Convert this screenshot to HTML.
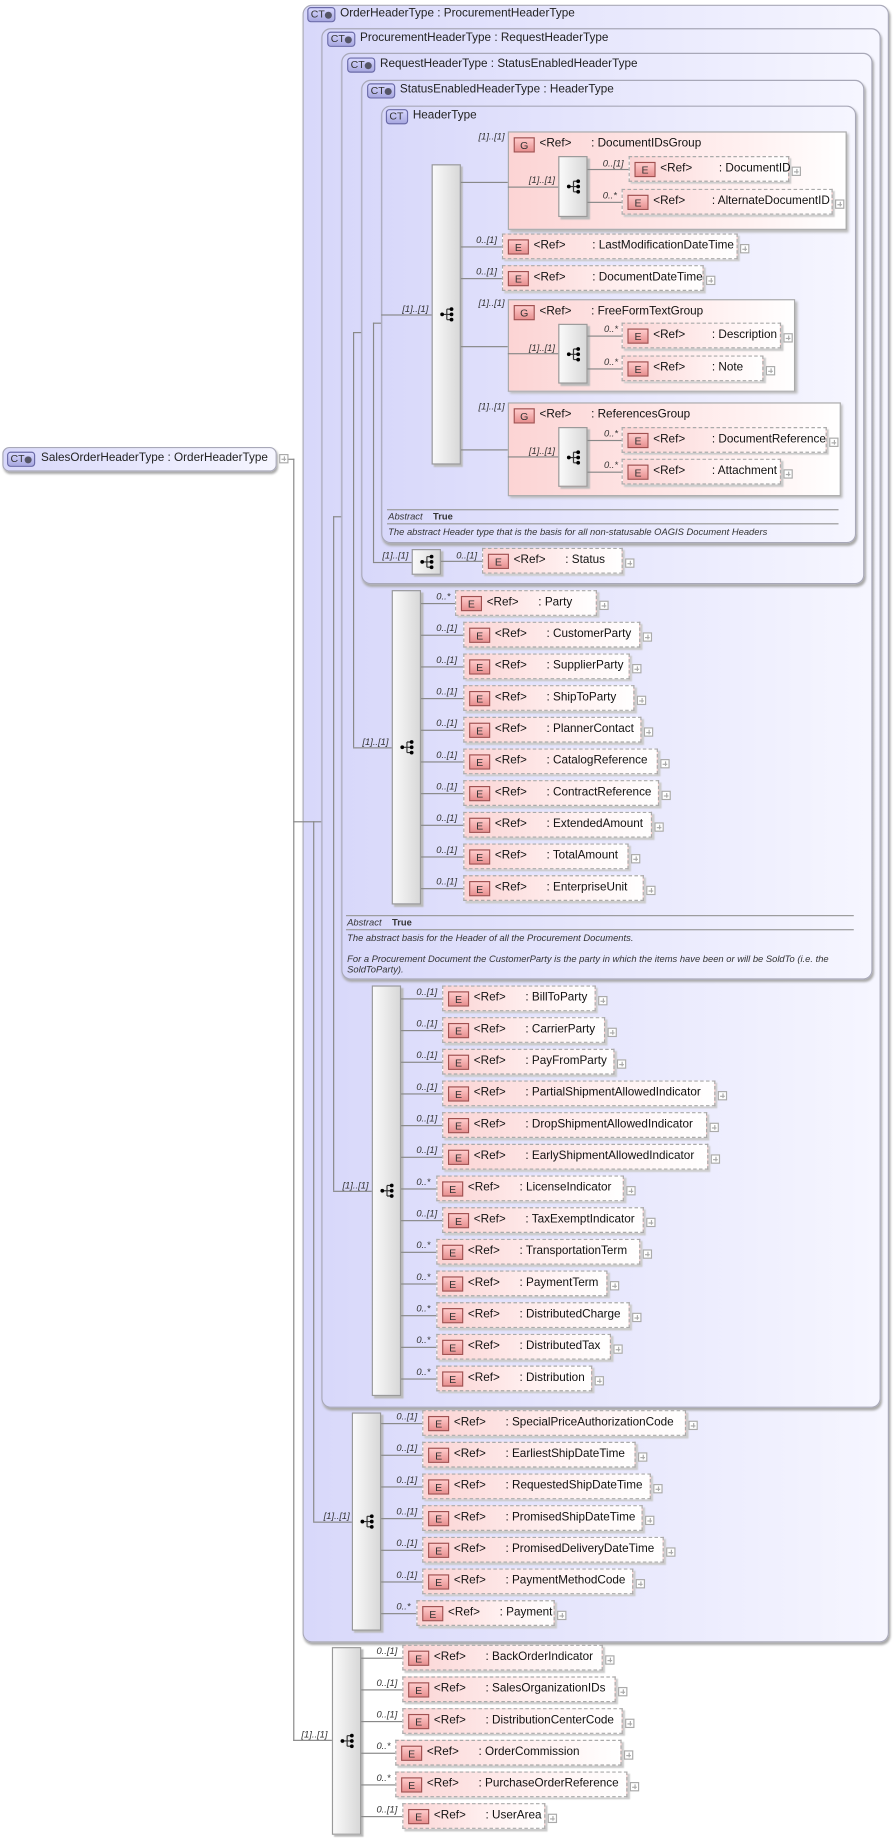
<!DOCTYPE html>
<html><head><meta charset="utf-8">
<style>
*{margin:0;padding:0;box-sizing:border-box}
body{width:896px;height:1843px;background:#fff;overflow:hidden;font-family:"Liberation Sans",Arial,sans-serif}
#s{position:absolute;left:0;top:0;width:764px;height:1571px;transform:scale(1.17277,1.17314);transform-origin:0 0}
#s div{position:absolute}
.b{border:1px solid #a8a8b8;border-radius:8px;background:linear-gradient(to right,#d8d8fa,#f6f6ff);box-shadow:1px 2px 2px #aaa}
.ti{font-size:10px;color:#222;white-space:nowrap}
.ct{width:24px;height:13px;border:1px solid #6a6aa8;border-radius:3px;background:linear-gradient(#d8d8ff,#a8a8e0);font-size:9px;line-height:11px;color:#333;padding-left:2px}
.ct.p:after{content:"";position:absolute;right:2px;top:3px;width:6px;height:6px;border-radius:50%;background:#556}
.e{height:22px;border:1px dashed #aaa;background:linear-gradient(to right,#fbd4d4,#fff0f0 60%,#fff);box-shadow:2px 2px 1px #ccc;font-size:10px;color:#111;white-space:nowrap}
.e i,.g i{position:absolute;left:4px;top:4px;width:18px;height:13px;border:1px solid #a05050;background:linear-gradient(#fcc,#e89090);font-style:normal;font-size:9px;line-height:12px;text-align:center;color:#333}
.e b,.g b{position:absolute;left:26px;top:4px;font-weight:normal}
.e s,.g s{position:absolute;left:70px;top:4px;text-decoration:none;font-weight:normal}
.e u{position:absolute;right:-11px;top:8px;width:8px;height:8px;border:1px solid #aaa;background:#fff}
.e u:before{content:"";position:absolute;left:1px;top:3px;width:4px;height:1px;background:#aaa}
.e u:after{content:"";position:absolute;left:3px;top:1px;width:1px;height:4px;background:#aaa}
.g{border:1px solid #aaa;background:linear-gradient(to right,#fcd4d4,#fff0f0 70%,#fff);box-shadow:2px 2px 2px #bbb;font-size:10px;color:#111;white-space:nowrap}
.q{width:25px;border:1px solid #999;background:linear-gradient(to right,#fafafa,#d8d8d8);box-shadow:2px 2px 1px #bbb;display:flex;align-items:center;justify-content:center}
.h{height:1px;background:#888}
.v{width:1px;background:#888}
.l{font-size:8px;font-style:italic;color:#333;white-space:nowrap}
.ab{font-size:8px;color:#333;white-space:nowrap}
.hr{height:1px;background:#999}
</style></head><body><div id="s">

<div class="b" style="left:2px;top:381px;width:234px;height:21px;border-radius:6px"></div>
<div class="ct p" style="left:6px;top:385px"><span>CT</span></div>
<div class="ti" style="left:35px;top:385px">SalesOrderHeaderType : OrderHeaderType</div>
<div class="e" style="left:238px;top:387px;width:0;height:0;border:none;box-shadow:none;background:none"><u style="left:0;top:0"></u></div>
<div class="h" style="left:246px;top:391px;width:5px"></div>
<div class="v" style="left:250px;top:391px;height:1093px"></div>
<div class="h" style="left:250px;top:700px;width:9px"></div>
<div class="h" style="left:250px;top:1483px;width:33px"></div>
<div class="l" style="left:257px;top:1474px">[1]..[1]</div>

<div class="b" style="left:258px;top:4px;width:500px;height:1396px"></div>
<div class="ct p" style="left:262px;top:6px">CT</div>
<div class="ti" style="left:290px;top:6px">OrderHeaderType : ProcurementHeaderType</div>
<div class="v" style="left:267px;top:700px;height:597px"></div>
<div class="h" style="left:258px;top:700px;width:16px"></div>
<div class="h" style="left:267px;top:1297px;width:33px"></div>
<div class="l" style="left:276px;top:1288px">[1]..[1]</div>

<div class="b" style="left:274px;top:24px;width:477px;height:1176px"></div>
<div class="ct p" style="left:279px;top:27px">CT</div>
<div class="ti" style="left:307px;top:27px">ProcurementHeaderType : RequestHeaderType</div>
<div class="v" style="left:284px;top:440px;height:575px"></div>
<div class="h" style="left:284px;top:440px;width:7px"></div>
<div class="h" style="left:284px;top:1015px;width:33px"></div>
<div class="l" style="left:292px;top:1006px">[1]..[1]</div>

<div class="b" style="left:291px;top:45px;width:453px;height:790px"></div>
<div class="ct p" style="left:296px;top:49px">CT</div>
<div class="ti" style="left:324px;top:49px">RequestHeaderType : StatusEnabledHeaderType</div>
<div class="v" style="left:301px;top:283px;height:354px"></div>
<div class="h" style="left:301px;top:283px;width:7px"></div>
<div class="h" style="left:301px;top:637px;width:33px"></div>
<div class="l" style="left:309px;top:628px">[1]..[1]</div>

<div class="b" style="left:308px;top:68px;width:429px;height:430px"></div>
<div class="ct p" style="left:313px;top:71px">CT</div>
<div class="ti" style="left:341px;top:71px">StatusEnabledHeaderType : HeaderType</div>
<div class="v" style="left:318px;top:275px;height:204px"></div>
<div class="h" style="left:318px;top:275px;width:7px"></div>
<div class="h" style="left:318px;top:479px;width:33px"></div>
<div class="l" style="left:326px;top:469px">[1]..[1]</div>

<div class="b" style="left:325px;top:90px;width:405px;height:373px"></div>
<div class="ct" style="left:329px;top:93px;width:19px">CT</div>
<div class="ti" style="left:352px;top:93px">HeaderType</div>
<div class="h" style="left:325px;top:268px;width:43px"></div>
<div class="l" style="left:343px;top:259px">[1]..[1]</div>

<div class="q" style="left:368px;top:140px;height:256px"><svg width="12" height="14"><path d="M2 7h4M6 2.5v9M6 2.5h4M6 7h4M6 11.5h4" stroke="#333" fill="none"/><circle cx="2" cy="7" r="1.6"/><circle cx="10" cy="2.5" r="1.6"/><circle cx="10" cy="7" r="1.6"/><circle cx="10" cy="11.5" r="1.6"/></svg></div>

<div class="h" style="left:393px;top:155px;width:40px"></div>
<div class="l" style="left:408px;top:112px">[1]..[1]</div>
<div class="g" style="left:433px;top:112px;width:289px;height:84px"><i>G</i><b>&lt;Ref&gt;</b><s>: DocumentIDsGroup</s></div>
<div class="h" style="left:433px;top:159px;width:43px"></div>
<div class="l" style="left:451px;top:149px">[1]..[1]</div>
<div class="q" style="left:476px;top:133px;height:52px"><svg width="12" height="14"><path d="M2 7h4M6 2.5v9M6 2.5h4M6 7h4M6 11.5h4" stroke="#333" fill="none"/><circle cx="2" cy="7" r="1.6"/><circle cx="10" cy="2.5" r="1.6"/><circle cx="10" cy="7" r="1.6"/><circle cx="10" cy="11.5" r="1.6"/></svg></div>
<div class="h" style="left:501px;top:144px;width:35px"></div><div class="l" style="left:514px;top:135px">0..[1]</div>
<div class="e" style="left:536px;top:133px;width:137px"><i>E</i><b>&lt;Ref&gt;</b><s style="left:76px">: DocumentID</s><u></u></div>
<div class="h" style="left:501px;top:172px;width:29px"></div><div class="l" style="left:514px;top:162px">0..*</div>
<div class="e" style="left:530px;top:161px;width:180px"><i>E</i><b>&lt;Ref&gt;</b><s style="left:76px">: AlternateDocumentID</s><u></u></div>

<div class="h" style="left:393px;top:210px;width:35px"></div><div class="l" style="left:406px;top:200px">0..[1]</div>
<div class="e" style="left:428px;top:199px;width:201px"><i>E</i><b>&lt;Ref&gt;</b><s style="left:76px">: LastModificationDateTime</s><u></u></div>
<div class="h" style="left:393px;top:237px;width:35px"></div><div class="l" style="left:406px;top:227px">0..[1]</div>
<div class="e" style="left:428px;top:226px;width:172px"><i>E</i><b>&lt;Ref&gt;</b><s style="left:76px">: DocumentDateTime</s><u></u></div>

<div class="h" style="left:393px;top:295px;width:40px"></div>
<div class="l" style="left:408px;top:254px">[1]..[1]</div>
<div class="g" style="left:433px;top:255px;width:245px;height:79px"><i>G</i><b>&lt;Ref&gt;</b><s>: FreeFormTextGroup</s></div>
<div class="h" style="left:433px;top:301px;width:43px"></div>
<div class="l" style="left:451px;top:292px">[1]..[1]</div>
<div class="q" style="left:476px;top:276px;height:51px"><svg width="12" height="14"><path d="M2 7h4M6 2.5v9M6 2.5h4M6 7h4M6 11.5h4" stroke="#333" fill="none"/><circle cx="2" cy="7" r="1.6"/><circle cx="10" cy="2.5" r="1.6"/><circle cx="10" cy="7" r="1.6"/><circle cx="10" cy="11.5" r="1.6"/></svg></div>
<div class="h" style="left:501px;top:286px;width:29px"></div><div class="l" style="left:515px;top:276px">0..*</div>
<div class="e" style="left:530px;top:275px;width:136px"><i>E</i><b>&lt;Ref&gt;</b><s style="left:76px">: Description</s><u></u></div>
<div class="h" style="left:501px;top:314px;width:29px"></div><div class="l" style="left:515px;top:304px">0..*</div>
<div class="e" style="left:530px;top:303px;width:121px"><i>E</i><b>&lt;Ref&gt;</b><s style="left:76px">: Note</s><u></u></div>

<div class="h" style="left:393px;top:383px;width:40px"></div>
<div class="l" style="left:408px;top:342px">[1]..[1]</div>
<div class="g" style="left:433px;top:343px;width:284px;height:80px"><i>G</i><b>&lt;Ref&gt;</b><s>: ReferencesGroup</s></div>
<div class="h" style="left:433px;top:389px;width:43px"></div>
<div class="l" style="left:451px;top:380px">[1]..[1]</div>
<div class="q" style="left:476px;top:364px;height:51px"><svg width="12" height="14"><path d="M2 7h4M6 2.5v9M6 2.5h4M6 7h4M6 11.5h4" stroke="#333" fill="none"/><circle cx="2" cy="7" r="1.6"/><circle cx="10" cy="2.5" r="1.6"/><circle cx="10" cy="7" r="1.6"/><circle cx="10" cy="11.5" r="1.6"/></svg></div>
<div class="h" style="left:501px;top:375px;width:29px"></div><div class="l" style="left:515px;top:365px">0..*</div>
<div class="e" style="left:530px;top:364px;width:175px"><i>E</i><b>&lt;Ref&gt;</b><s style="left:76px">: DocumentReference</s><u></u></div>
<div class="h" style="left:501px;top:402px;width:29px"></div><div class="l" style="left:515px;top:392px">0..*</div>
<div class="e" style="left:530px;top:391px;width:136px"><i>E</i><b>&lt;Ref&gt;</b><s style="left:76px">: Attachment</s><u></u></div>

<div class="hr" style="left:330px;top:434px;width:385px"></div>
<div class="ab" style="left:331px;top:436px"><i>Abstract</i> &nbsp; &nbsp;<b>True</b></div>
<div class="hr" style="left:330px;top:446px;width:385px"></div>
<div class="ab" style="left:331px;top:449px;font-style:italic">The abstract Header type that is the basis for all non-statusable OAGIS Document Headers</div>

<div class="q" style="left:351px;top:468px;height:22px"><svg width="12" height="14"><path d="M2 7h4M6 2.5v9M6 2.5h4M6 7h4M6 11.5h4" stroke="#333" fill="none"/><circle cx="2" cy="7" r="1.6"/><circle cx="10" cy="2.5" r="1.6"/><circle cx="10" cy="7" r="1.6"/><circle cx="10" cy="11.5" r="1.6"/></svg></div>
<div class="h" style="left:376px;top:478px;width:35px"></div><div class="l" style="left:389px;top:469px">0..[1]</div>
<div class="e" style="left:411px;top:467px;width:120px"><i>E</i><b>&lt;Ref&gt;</b><s>: Status</s><u></u></div>

<div class="q" style="left:334px;top:503px;height:268px"><svg width="12" height="14"><path d="M2 7h4M6 2.5v9M6 2.5h4M6 7h4M6 11.5h4" stroke="#333" fill="none"/><circle cx="2" cy="7" r="1.6"/><circle cx="10" cy="2.5" r="1.6"/><circle cx="10" cy="7" r="1.6"/><circle cx="10" cy="11.5" r="1.6"/></svg></div>
<div class="h" style="left:359px;top:514px;width:29px"></div><div class="l" style="left:372px;top:504px">0..*</div>
<div class="e" style="left:388px;top:503px;width:121px"><i>E</i><b>&lt;Ref&gt;</b><s>: Party</s><u></u></div>
<div class="h" style="left:359px;top:541px;width:36px"></div><div class="l" style="left:372px;top:531px">0..[1]</div>
<div class="e" style="left:395px;top:530px;width:151px"><i>E</i><b>&lt;Ref&gt;</b><s>: CustomerParty</s><u></u></div>
<div class="h" style="left:359px;top:568px;width:36px"></div><div class="l" style="left:372px;top:558px">0..[1]</div>
<div class="e" style="left:395px;top:557px;width:142px"><i>E</i><b>&lt;Ref&gt;</b><s>: SupplierParty</s><u></u></div>
<div class="h" style="left:359px;top:595px;width:36px"></div><div class="l" style="left:372px;top:585px">0..[1]</div>
<div class="e" style="left:395px;top:584px;width:146px"><i>E</i><b>&lt;Ref&gt;</b><s>: ShipToParty</s><u></u></div>
<div class="h" style="left:359px;top:622px;width:36px"></div><div class="l" style="left:372px;top:612px">0..[1]</div>
<div class="e" style="left:395px;top:611px;width:152px"><i>E</i><b>&lt;Ref&gt;</b><s>: PlannerContact</s><u></u></div>
<div class="h" style="left:359px;top:649px;width:36px"></div><div class="l" style="left:372px;top:639px">0..[1]</div>
<div class="e" style="left:395px;top:638px;width:166px"><i>E</i><b>&lt;Ref&gt;</b><s>: CatalogReference</s><u></u></div>
<div class="h" style="left:359px;top:676px;width:36px"></div><div class="l" style="left:372px;top:666px">0..[1]</div>
<div class="e" style="left:395px;top:665px;width:167px"><i>E</i><b>&lt;Ref&gt;</b><s>: ContractReference</s><u></u></div>
<div class="h" style="left:359px;top:703px;width:36px"></div><div class="l" style="left:372px;top:693px">0..[1]</div>
<div class="e" style="left:395px;top:692px;width:161px"><i>E</i><b>&lt;Ref&gt;</b><s>: ExtendedAmount</s><u></u></div>
<div class="h" style="left:359px;top:730px;width:36px"></div><div class="l" style="left:372px;top:720px">0..[1]</div>
<div class="e" style="left:395px;top:719px;width:141px"><i>E</i><b>&lt;Ref&gt;</b><s>: TotalAmount</s><u></u></div>
<div class="h" style="left:359px;top:757px;width:36px"></div><div class="l" style="left:372px;top:747px">0..[1]</div>
<div class="e" style="left:395px;top:746px;width:154px"><i>E</i><b>&lt;Ref&gt;</b><s>: EnterpriseUnit</s><u></u></div>

<div class="hr" style="left:295px;top:780px;width:433px"></div>
<div class="ab" style="left:296px;top:782px"><i>Abstract</i> &nbsp; &nbsp;<b>True</b></div>
<div class="hr" style="left:295px;top:792px;width:433px"></div>
<div class="ab" style="left:296px;top:795px;font-style:italic">The abstract basis for the Header of all the Procurement Documents.</div>
<div class="ab" style="left:296px;top:813px;font-style:italic">For a Procurement Document the CustomerParty is the party in which the items have been or will be SoldTo (i.e. the</div>
<div class="ab" style="left:296px;top:822px;font-style:italic">SoldToParty).</div>

<div class="q" style="left:317px;top:840px;height:350px"><svg width="12" height="14"><path d="M2 7h4M6 2.5v9M6 2.5h4M6 7h4M6 11.5h4" stroke="#333" fill="none"/><circle cx="2" cy="7" r="1.6"/><circle cx="10" cy="2.5" r="1.6"/><circle cx="10" cy="7" r="1.6"/><circle cx="10" cy="11.5" r="1.6"/></svg></div>
<div class="h" style="left:342px;top:851px;width:35px"></div><div class="l" style="left:355px;top:841px">0..[1]</div>
<div class="e" style="left:377px;top:840px;width:131px"><i>E</i><b>&lt;Ref&gt;</b><s>: BillToParty</s><u></u></div>
<div class="h" style="left:342px;top:878px;width:35px"></div><div class="l" style="left:355px;top:868px">0..[1]</div>
<div class="e" style="left:377px;top:867px;width:139px"><i>E</i><b>&lt;Ref&gt;</b><s>: CarrierParty</s><u></u></div>
<div class="h" style="left:342px;top:905px;width:35px"></div><div class="l" style="left:355px;top:895px">0..[1]</div>
<div class="e" style="left:377px;top:894px;width:147px"><i>E</i><b>&lt;Ref&gt;</b><s>: PayFromParty</s><u></u></div>
<div class="h" style="left:342px;top:932px;width:35px"></div><div class="l" style="left:355px;top:922px">0..[1]</div>
<div class="e" style="left:377px;top:921px;width:233px"><i>E</i><b>&lt;Ref&gt;</b><s>: PartialShipmentAllowedIndicator</s><u></u></div>
<div class="h" style="left:342px;top:959px;width:35px"></div><div class="l" style="left:355px;top:949px">0..[1]</div>
<div class="e" style="left:377px;top:948px;width:226px"><i>E</i><b>&lt;Ref&gt;</b><s>: DropShipmentAllowedIndicator</s><u></u></div>
<div class="h" style="left:342px;top:986px;width:35px"></div><div class="l" style="left:355px;top:976px">0..[1]</div>
<div class="e" style="left:377px;top:975px;width:227px"><i>E</i><b>&lt;Ref&gt;</b><s>: EarlyShipmentAllowedIndicator</s><u></u></div>
<div class="h" style="left:342px;top:1013px;width:30px"></div><div class="l" style="left:355px;top:1003px">0..*</div>
<div class="e" style="left:372px;top:1002px;width:160px"><i>E</i><b>&lt;Ref&gt;</b><s>: LicenseIndicator</s><u></u></div>
<div class="h" style="left:342px;top:1040px;width:35px"></div><div class="l" style="left:355px;top:1030px">0..[1]</div>
<div class="e" style="left:377px;top:1029px;width:172px"><i>E</i><b>&lt;Ref&gt;</b><s>: TaxExemptIndicator</s><u></u></div>
<div class="h" style="left:342px;top:1067px;width:30px"></div><div class="l" style="left:355px;top:1057px">0..*</div>
<div class="e" style="left:372px;top:1056px;width:174px"><i>E</i><b>&lt;Ref&gt;</b><s>: TransportationTerm</s><u></u></div>
<div class="h" style="left:342px;top:1094px;width:30px"></div><div class="l" style="left:355px;top:1084px">0..*</div>
<div class="e" style="left:372px;top:1083px;width:146px"><i>E</i><b>&lt;Ref&gt;</b><s>: PaymentTerm</s><u></u></div>
<div class="h" style="left:342px;top:1121px;width:30px"></div><div class="l" style="left:355px;top:1111px">0..*</div>
<div class="e" style="left:372px;top:1110px;width:165px"><i>E</i><b>&lt;Ref&gt;</b><s>: DistributedCharge</s><u></u></div>
<div class="h" style="left:342px;top:1148px;width:30px"></div><div class="l" style="left:355px;top:1138px">0..*</div>
<div class="e" style="left:372px;top:1137px;width:149px"><i>E</i><b>&lt;Ref&gt;</b><s>: DistributedTax</s><u></u></div>
<div class="h" style="left:342px;top:1175px;width:30px"></div><div class="l" style="left:355px;top:1165px">0..*</div>
<div class="e" style="left:372px;top:1164px;width:133px"><i>E</i><b>&lt;Ref&gt;</b><s>: Distribution</s><u></u></div>

<div class="q" style="left:300px;top:1204px;height:186px"><svg width="12" height="14"><path d="M2 7h4M6 2.5v9M6 2.5h4M6 7h4M6 11.5h4" stroke="#333" fill="none"/><circle cx="2" cy="7" r="1.6"/><circle cx="10" cy="2.5" r="1.6"/><circle cx="10" cy="7" r="1.6"/><circle cx="10" cy="11.5" r="1.6"/></svg></div>
<div class="h" style="left:325px;top:1213px;width:35px"></div><div class="l" style="left:338px;top:1203px">0..[1]</div>
<div class="e" style="left:360px;top:1202px;width:225px"><i>E</i><b>&lt;Ref&gt;</b><s>: SpecialPriceAuthorizationCode</s><u></u></div>
<div class="h" style="left:325px;top:1240px;width:35px"></div><div class="l" style="left:338px;top:1230px">0..[1]</div>
<div class="e" style="left:360px;top:1229px;width:182px"><i>E</i><b>&lt;Ref&gt;</b><s>: EarliestShipDateTime</s><u></u></div>
<div class="h" style="left:325px;top:1267px;width:35px"></div><div class="l" style="left:338px;top:1257px">0..[1]</div>
<div class="e" style="left:360px;top:1256px;width:195px"><i>E</i><b>&lt;Ref&gt;</b><s>: RequestedShipDateTime</s><u></u></div>
<div class="h" style="left:325px;top:1294px;width:35px"></div><div class="l" style="left:338px;top:1284px">0..[1]</div>
<div class="e" style="left:360px;top:1283px;width:188px"><i>E</i><b>&lt;Ref&gt;</b><s>: PromisedShipDateTime</s><u></u></div>
<div class="h" style="left:325px;top:1321px;width:35px"></div><div class="l" style="left:338px;top:1311px">0..[1]</div>
<div class="e" style="left:360px;top:1310px;width:206px"><i>E</i><b>&lt;Ref&gt;</b><s>: PromisedDeliveryDateTime</s><u></u></div>
<div class="h" style="left:325px;top:1348px;width:35px"></div><div class="l" style="left:338px;top:1338px">0..[1]</div>
<div class="e" style="left:360px;top:1337px;width:180px"><i>E</i><b>&lt;Ref&gt;</b><s>: PaymentMethodCode</s><u></u></div>
<div class="h" style="left:325px;top:1375px;width:30px"></div><div class="l" style="left:338px;top:1365px">0..*</div>
<div class="e" style="left:355px;top:1364px;width:118px"><i>E</i><b>&lt;Ref&gt;</b><s>: Payment</s><u></u></div>

<div class="q" style="left:283px;top:1404px;height:160px"><svg width="12" height="14"><path d="M2 7h4M6 2.5v9M6 2.5h4M6 7h4M6 11.5h4" stroke="#333" fill="none"/><circle cx="2" cy="7" r="1.6"/><circle cx="10" cy="2.5" r="1.6"/><circle cx="10" cy="7" r="1.6"/><circle cx="10" cy="11.5" r="1.6"/></svg></div>
<div class="h" style="left:308px;top:1413px;width:35px"></div><div class="l" style="left:321px;top:1403px">0..[1]</div>
<div class="e" style="left:343px;top:1402px;width:171px"><i>E</i><b>&lt;Ref&gt;</b><s>: BackOrderIndicator</s><u></u></div>
<div class="h" style="left:308px;top:1440px;width:35px"></div><div class="l" style="left:321px;top:1430px">0..[1]</div>
<div class="e" style="left:343px;top:1429px;width:182px"><i>E</i><b>&lt;Ref&gt;</b><s>: SalesOrganizationIDs</s><u></u></div>
<div class="h" style="left:308px;top:1467px;width:35px"></div><div class="l" style="left:321px;top:1457px">0..[1]</div>
<div class="e" style="left:343px;top:1456px;width:188px"><i>E</i><b>&lt;Ref&gt;</b><s>: DistributionCenterCode</s><u></u></div>
<div class="h" style="left:308px;top:1494px;width:29px"></div><div class="l" style="left:321px;top:1484px">0..*</div>
<div class="e" style="left:337px;top:1483px;width:193px"><i>E</i><b>&lt;Ref&gt;</b><s>: OrderCommission</s><u></u></div>
<div class="h" style="left:308px;top:1521px;width:29px"></div><div class="l" style="left:321px;top:1511px">0..*</div>
<div class="e" style="left:337px;top:1510px;width:198px"><i>E</i><b>&lt;Ref&gt;</b><s>: PurchaseOrderReference</s><u></u></div>
<div class="h" style="left:308px;top:1548px;width:35px"></div><div class="l" style="left:321px;top:1538px">0..[1]</div>
<div class="e" style="left:343px;top:1537px;width:122px"><i>E</i><b>&lt;Ref&gt;</b><s>: UserArea</s><u></u></div>

</div></body></html>
